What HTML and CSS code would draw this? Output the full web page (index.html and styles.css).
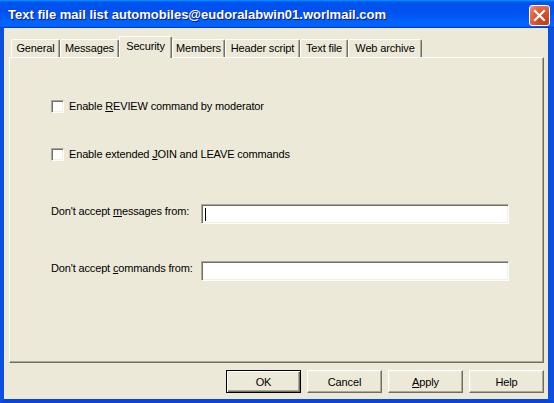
FILE: index.html
```html
<!DOCTYPE html>
<html>
<head>
<meta charset="utf-8">
<link rel="stylesheet" href="styles.css">
</head>
<body>
<div class="window">
  <div class="titlebar">
    <span class="title">Text file mail list automobiles@eudoralabwin01.worlmail.com</span>
    <span class="close">
      <svg width="13" height="13" viewBox="0 0 13 13"><path d="M2 2 L11 11 M11 2 L2 11" stroke="#fff" stroke-width="2.2" stroke-linecap="square"/></svg>
    </span>
  </div>
  <div class="client">
    <div class="tabs">
      <div class="tab t-general">General</div>
      <div class="tab t-messages">Messages</div>
      <div class="tab t-security active">Security</div>
      <div class="tab t-members">Members</div>
      <div class="tab t-header">Header script</div>
      <div class="tab t-text">Text file</div>
      <div class="tab t-web">Web archive</div>
    </div>
    <div class="panel">
      <div class="check-row first">
        <span class="checkbox"></span>
        <span class="label">Enable <u>R</u>EVIEW command by moderator</span>
      </div>
      <div class="check-row second">
        <span class="checkbox"></span>
        <span class="label">Enable extended <u>J</u>OIN and LEAVE commands</span>
      </div>
      <div class="field-row first-field">
        <span class="field-label">Don't accept <u>m</u>essages from:</span>
        <span class="input"><span class="caret"></span></span>
      </div>
      <div class="field-row second-field">
        <span class="field-label">Don't accept <u>c</u>ommands from:</span>
        <span class="input"></span>
      </div>
    </div>
    <div class="buttons">
      <div class="btn default">OK</div>
      <div class="btn">Cancel</div>
      <div class="btn"><u>A</u>pply</div>
      <div class="btn">Help</div>
    </div>
  </div>
</div>
</body>
</html>
```

FILE: styles.css
```css
html, body {
  margin: 0;
  padding: 0;
  width: 554px;
  height: 403px;
  overflow: hidden;
  background: #0055e5;
}

.window {
  width: 554px;
  height: 403px;
  display: flex;
  flex-direction: column;
  font-family: "Liberation Sans", Arial, sans-serif;
  font-size: 11px;
  letter-spacing: -0.15px;
  color: #000;
}

.titlebar {
  height: 28px;
  flex: none;
  display: flex;
  align-items: center;
  justify-content: space-between;
  padding: 0 4px 0 8px;
  background: linear-gradient(180deg, #0997ff, #0053ee 8%, #0050ee 40%, #0066ff 88%, #0066ff 93%, #005bff 95%, #003dd7 96%, #003dd7);
}

.title {
  color: #fff;
  font-weight: bold;
  font-size: 13px;
  letter-spacing: 0;
  text-shadow: 1px 1px #0a1883;
  white-space: nowrap;
  padding-top: 1px;
}

.close {
  width: 19px;
  height: 19px;
  border: 1px solid #fff;
  border-radius: 3px;
  background: radial-gradient(circle at 80% 85%, #c23c14 0%, #d9532a 45%, #e6764f 80%, #f0a88e 100%);
  display: flex;
  align-items: center;
  justify-content: center;
  margin-top: 2px;
}

.client {
  flex: 1;
  background: #ece9d8;
  border-left: 4px solid #0a50e2;
  border-right: 6px solid #0a50e2;
  border-bottom: 4px solid #0a44d8;
  padding: 8px 4px 0 5px;
  display: flex;
  flex-direction: column;
}

.tabs {
  height: 21px;
  display: flex;
  align-items: flex-end;
  padding-left: 2px;
  position: relative;
  z-index: 2;
}

.tab {
  box-sizing: border-box;
  height: 18px;
  border-top: 1px solid #fff;
  border-left: 1px solid #fff;
  border-right: 1px solid #716f64;
  box-shadow: inset -1px 0 #aca899;
  border-radius: 2px 2px 0 0;
  text-align: center;
  line-height: 17px;
  white-space: nowrap;
  background: #ece9d8;
}

.tab.active {
  height: 22px;
  margin-bottom: -1px;
  line-height: 19px;
}

.t-general { width: 49px; }
.t-messages { width: 59px; }
.t-security { width: 53px; }
.t-members { width: 53px; }
.t-header { width: 75px; }
.t-text { width: 48px; }
.t-web { width: 74px; }

.panel {
  box-sizing: border-box;
  height: 306px;
  border-top: 1px solid #fff;
  border-left: 1px solid #fff;
  border-right: 1px solid #716f64;
  border-bottom: 1px solid #716f64;
  box-shadow: inset -1px -1px #aca899;
  padding-left: 41px;
  display: flex;
  flex-direction: column;
  position: relative;
  z-index: 1;
}

.check-row {
  display: flex;
  align-items: center;
  height: 13px;
}

.check-row.first { margin-top: 42px; }
.check-row.second { margin-top: 35px; }

.checkbox {
  box-sizing: border-box;
  width: 13px;
  height: 13px;
  background: #fff;
  border: 1px solid;
  border-color: #aca899 #fff #fff #aca899;
  box-shadow: inset 1px 1px #716f64, inset -1px -1px #f1efe2;
  flex: none;
}

.label {
  margin-left: 5px;
  line-height: 13px;
  white-space: nowrap;
}

.field-row {
  display: flex;
  align-items: flex-start;
}

.field-row.first-field { margin-top: 43px; }
.field-row.second-field { margin-top: 37px; }

.field-label {
  width: 150px;
  line-height: 14px;
  white-space: nowrap;
  flex: none;
}

.input {
  box-sizing: border-box;
  width: 308px;
  height: 20px;
  background: #fff;
  border: 1px solid;
  border-color: #aca899 #fff #fff #aca899;
  box-shadow: inset 1px 1px #716f64, inset -1px -1px #f1efe2;
  position: relative;
}

.caret {
  position: absolute;
  left: 3px;
  top: 3px;
  width: 1px;
  height: 13px;
  background: #000;
}

.buttons {
  display: flex;
  justify-content: flex-end;
  gap: 6px;
  margin-top: 7px;
}

.btn {
  box-sizing: border-box;
  width: 75px;
  height: 23px;
  border: 1px solid;
  border-color: #fff #716f64 #716f64 #fff;
  box-shadow: inset -1px -1px #aca899, inset 1px 1px #f1efe2;
  display: flex;
  align-items: center;
  justify-content: center;
  background: #ece9d8;
}

.btn.default {
  border: 1px solid #000;
  box-shadow: inset 1px 1px #fff, inset -1px -1px #716f64, inset -2px -2px #aca899;
}
```
